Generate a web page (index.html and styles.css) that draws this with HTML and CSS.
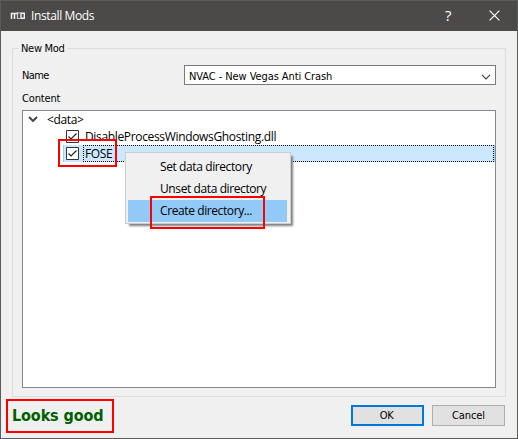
FILE: index.html
```html
<!DOCTYPE html>
<html lang="en">
<head>
<meta charset="utf-8">
<title>Install Mods</title>
<link rel="stylesheet" href="styles.css">
</head>
<body>
<div class="window">
  <header class="titlebar">
    <svg class="logo" width="16" height="8" viewBox="0 0 16 8" fill="none"><path d="M1.5 7V1.5H7M4.5 1V7" stroke="#f1f1ee" stroke-width="1.5"/><path d="M7.5 0V7" stroke="#b9d8df" stroke-width="1.3"/><path d="M8 6.5H10.5M8 1H11" stroke="#b5c6c8" stroke-width="1"/><path d="M11 1.2H14.3V6.3H11Z" stroke="#f1f1ee" stroke-width="1.4"/></svg>
    <h1><span class="t-title">Install Mods</span></h1>
    <span class="help">?</span>
    <svg class="close" width="11" height="11" viewBox="0 0 11 11" fill="none"><path d="M.6 .6L10.4 10.4M10.4 .6L.6 10.4" stroke="#fff" stroke-width="1.2"/></svg>
  </header>
  <main class="content">
    <fieldset class="group">
      <legend><span class="t-legend">New Mod</span></legend>
      <div class="name-row">
        <label><span class="t-name">Name</span></label>
        <div class="combo"><span class="t-combo">NVAC - New Vegas Anti Crash</span>
          <svg width="10" height="6" viewBox="0 0 10 6" fill="none"><path d="M1 .8L5 4.8L9 .8" stroke="#444" stroke-width="1.2"/></svg>
        </div>
      </div>
      <div class="content-label"><span class="t-content">Content</span></div>
      <div class="tree">
        <div class="row root">
          <svg width="10" height="7" viewBox="0 0 10 7" fill="none"><path d="M1 1L5 5L9 1" stroke="#404040" stroke-width="1.9"/></svg>
          <span class="t-data">&lt;data&gt;</span>
        </div>
        <div class="row child">
          <svg class="check" width="13" height="13" viewBox="0 0 13 13" fill="none"><path d="M.5 .5H12.5V12.5H.5Z" fill="#fff" stroke="#333"/><path d="M2.5 6.5L5 9L10.5 3.5" stroke="#222" stroke-width="1.2"/></svg>
          <span class="cell"><span class="t-dll">DisableProcessWindowsGhosting.dll</span></span>
        </div>
        <div class="row child selected">
          <svg class="check" width="13" height="13" viewBox="0 0 13 13" fill="none"><path d="M.5 .5H12.5V12.5H.5Z" fill="#fff" stroke="#333"/><path d="M2.5 6.5L5 9L10.5 3.5" stroke="#222" stroke-width="1.2"/></svg>
          <span class="cell"><span class="t-fose">FOSE</span></span>
        </div>
      </div>
    </fieldset>
    <footer class="footer">
      <strong><span class="t-status">Looks good</span></strong>
      <button class="ok"><span class="t-ok">OK</span></button>
      <button><span class="t-cancel">Cancel</span></button>
    </footer>
  </main>
  <div class="menu">
    <div class="item"><span class="t-set">Set data directory</span></div>
    <div class="item"><span class="t-unset">Unset data directory</span></div>
    <div class="item active"><span class="t-create">Create directory...</span></div>
  </div>
  <div class="mark mark-check"></div>
  <div class="mark mark-menu"></div>
  <div class="mark mark-status"></div>
</div>
</body>
</html>
```
FILE: styles.css
```css
* { box-sizing: border-box; }
body { margin: 0; font: 11px/14px "DejaVu Sans Condensed", "DejaVu Sans", sans-serif; color: #000; }
.window { position: relative; width: 518px; height: 439px; background: #f0f0f0; border: 1px solid #5b5b5a; border-top: 0; overflow: hidden; }
.titlebar { height: 31px; background: #4c4a48; border-top: 1px solid #5d5b59; display: flex; align-items: center; padding: 0 14px 0 9px; color: #fff; }
.logo { display: block; margin-top: -1px; }
h1 { margin: 0 auto 0 5px; font: 12px/16px "Open Sans", sans-serif; }
.help { font: 15px/18px "Open Sans", sans-serif; margin: -2px 36px 0 0; width: 8px; }
.close { margin: -2px 3px 0 0; }
span { white-space: nowrap; }
.t-title { letter-spacing: -.37px; }
.t-legend { letter-spacing: -.3px; }
.t-name { letter-spacing: -.6px; }
.t-content { letter-spacing: -.15px; }
.t-combo { letter-spacing: -.08px; }
.t-data { letter-spacing: -.35px; }
.t-dll { letter-spacing: -.34px; }
.t-fose { letter-spacing: -.4px; }
.t-set, .t-unset, .t-create { letter-spacing: -.4px; }
.t-status, .t-cancel { letter-spacing: -.1px; }
.t-ok { letter-spacing: -.5px; margin-right: 2px; }
.content { padding: 10px 11px 0; }
.group { margin: 0; padding: 9px 9px 9px; border: 1px solid #dcdcdc; height: 356px; min-width: 0; }
legend { margin-left: -3px; padding: 0 2px; height: 15px; line-height: 15px; }
.name-row { height: 20px; display: flex; align-items: center; }
.name-row label { width: 162px; line-height: 20px; padding-top: 2px; }
.combo { flex: 1; height: 20px; border: 1px solid #7a7a7a; background: #fff; display: flex; align-items: center; justify-content: space-between; padding: 3px 4px 0 4px; }
.content-label { height: 25px; padding: 7px 0 0; }
.tree { height: 278px; border: 1px solid #828790; background: #fff; font: 12px/17px "Open Sans", sans-serif; }
.row { height: 17px; display: flex; align-items: center; }
.root { padding-left: 5px; gap: 9px; }
.child { margin-left: 40px; padding-left: 3px; }
.check { margin-right: 4px; flex: none; }
.cell { flex: 1; height: 17px; padding-left: 2px; line-height: 17px; }
.selected { background: #cce8ff; border-left: 1px solid #99d1ff; border-right: 1px solid #99d1ff; padding-left: 2px; }
.selected .cell { border: 1px dotted #000; padding-left: 1px; line-height: 15px; }
.footer { display: flex; align-items: center; gap: 8px; height: 21px; margin-top: 8px; }
strong { margin-right: auto; color: #006000; font: bold 16px/21px "DejaVu Sans Condensed", sans-serif; }
button { width: 73px; height: 21px; padding: 0; border: 1px solid #adadad; background: #e1e1e1; font: inherit; color: #000; }
.footer button:last-child { margin-right: 1px; }
.ok { border: 2px solid #0078d7; }
.menu { position: absolute; left: 124px; top: 152px; width: 166px; height: 72px; border: 1px solid #ccc; background: #f0f0f0; padding: 3px 3px 3px 2px; box-shadow: 3px 3px 2px -1px #808080; font: 12px/22px "Open Sans", sans-serif; }
.item { height: 22px; padding-left: 32px; }
.active { background: #91c9f7; }
.mark { position: absolute; border: 2px solid #f00; }
.mark-check { left: 57px; top: 139px; width: 59px; height: 28px; }
.mark-menu { left: 149px; top: 196px; width: 115px; height: 33px; }
.mark-status { left: 5px; top: 399px; width: 108px; height: 34px; }
```
